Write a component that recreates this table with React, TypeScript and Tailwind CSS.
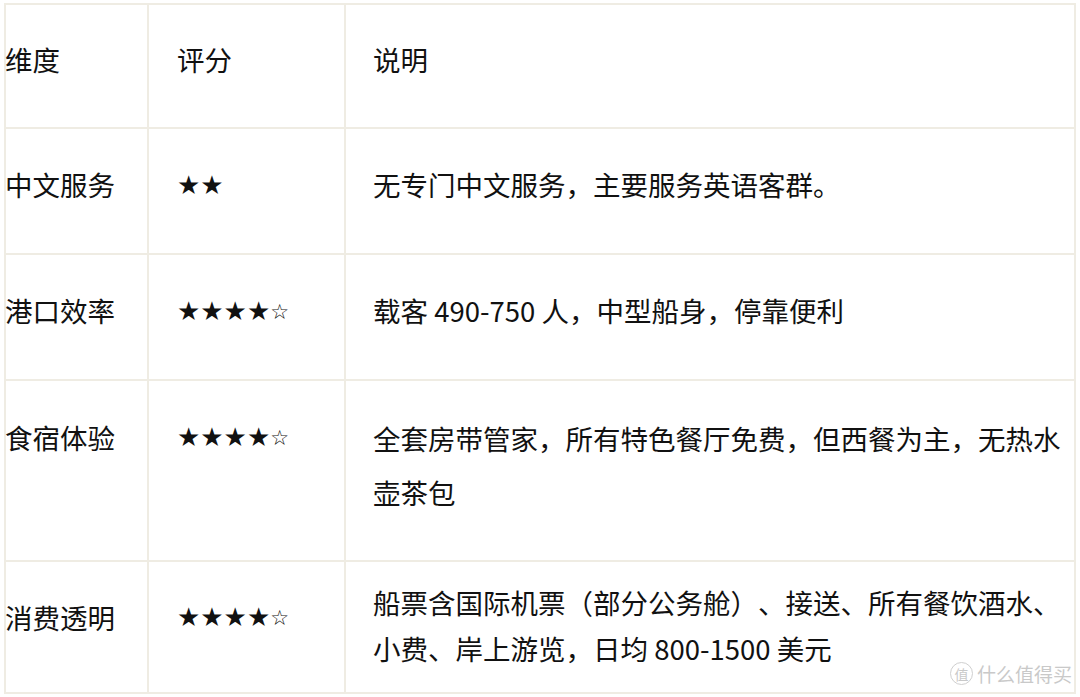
import React from "react";

const cjk = { fontFamily: '"Noto Sans CJK SC", "Noto Sans", sans-serif' };
const starFont = { fontFamily: '"DejaVu Sans", sans-serif' };

function Stars({ n, empty }: { n: number; empty: number }) {
  return (
    <span className="text-[26px] leading-none text-[#111]" style={starFont}>
      {"★".repeat(n)}
      {empty > 0 && <span className="text-[21px] align-[1px]">{"☆".repeat(empty)}</span>}
    </span>
  );
}

function First({ children }: { children: React.ReactNode }) {
  return <span className="-ml-[1px]">{children}</span>;
}

export default function App() {
  const cell = "bg-white flex items-center";
  const top = "bg-white flex items-start leading-[40px]";
  return (
    <div className="w-[1080px] h-[697px] bg-white relative overflow-hidden [text-spacing-trim:space-all]" style={cjk}>
      <div className="ml-[4px] mt-[3px] w-[1072px] bg-[#efece3] p-[2px] grid grid-cols-[141px_195px_728px] grid-rows-[122px_124px_124px_179px_130px] gap-[2px] text-[27.5px] text-[#111]">
        <div className={`${cell} pb-3`}><First>维度</First></div>
        <div className={`${cell} pl-[28px] pb-3`}>评分</div>
        <div className={`${cell} pl-[27px] pb-3`}>说明</div>

        <div className={`${cell} pb-3`}><First>中文服务</First></div>
        <div className={`${cell} pl-[28px] pb-3`}><Stars n={2} empty={0} /></div>
        <div className={`${cell} pl-[27px] pb-3`}>无专门中文服务，主要服务英语客群。</div>

        <div className={`${cell} pb-3`}><First>港口效率</First></div>
        <div className={`${cell} pl-[28px] pb-3`}><Stars n={4} empty={1} /></div>
        <div className={`${cell} pl-[27px] pb-3`}>载客 490-750 人，中型船身，停靠便利</div>

        <div className={`${top} pt-[36px]`}><First>食宿体验</First></div>
        <div className={`${top} pl-[28px] pt-[43px]`}><Stars n={4} empty={1} /></div>
        <div className={`${cell} pl-[27px] pb-3`}>
          <p className="leading-[54px] whitespace-nowrap">
            全套房带管家，所有特色餐厅免费，但西餐为主，无热水
            <br />
            壶茶包
          </p>
        </div>

        <div className={`${top} pt-[35px]`}><First>消费透明</First></div>
        <div className={`${top} pl-[28px] pt-[42px]`}><Stars n={4} empty={1} /></div>
        <div className={`${cell} pl-[27px] pb-[4px]`}>
          <p className="leading-[46px] whitespace-nowrap">
            船票含国际机票（部分公务舱）、接送、所有餐饮酒水、
            <br />
            小费、岸上游览，日均 800-1500 美元
          </p>
        </div>
      </div>

      <div className="absolute left-[950px] top-[662px] flex items-center gap-[4px] text-[#c9c9c9]">
        <div className="w-[23px] h-[23px] rounded-full border-[1.5px] border-[#cfcfcf] flex items-center justify-center text-[14px] leading-none">
          值
        </div>
        <span className="text-[19px] leading-none">什么值得买</span>
      </div>
    </div>
  );
}
